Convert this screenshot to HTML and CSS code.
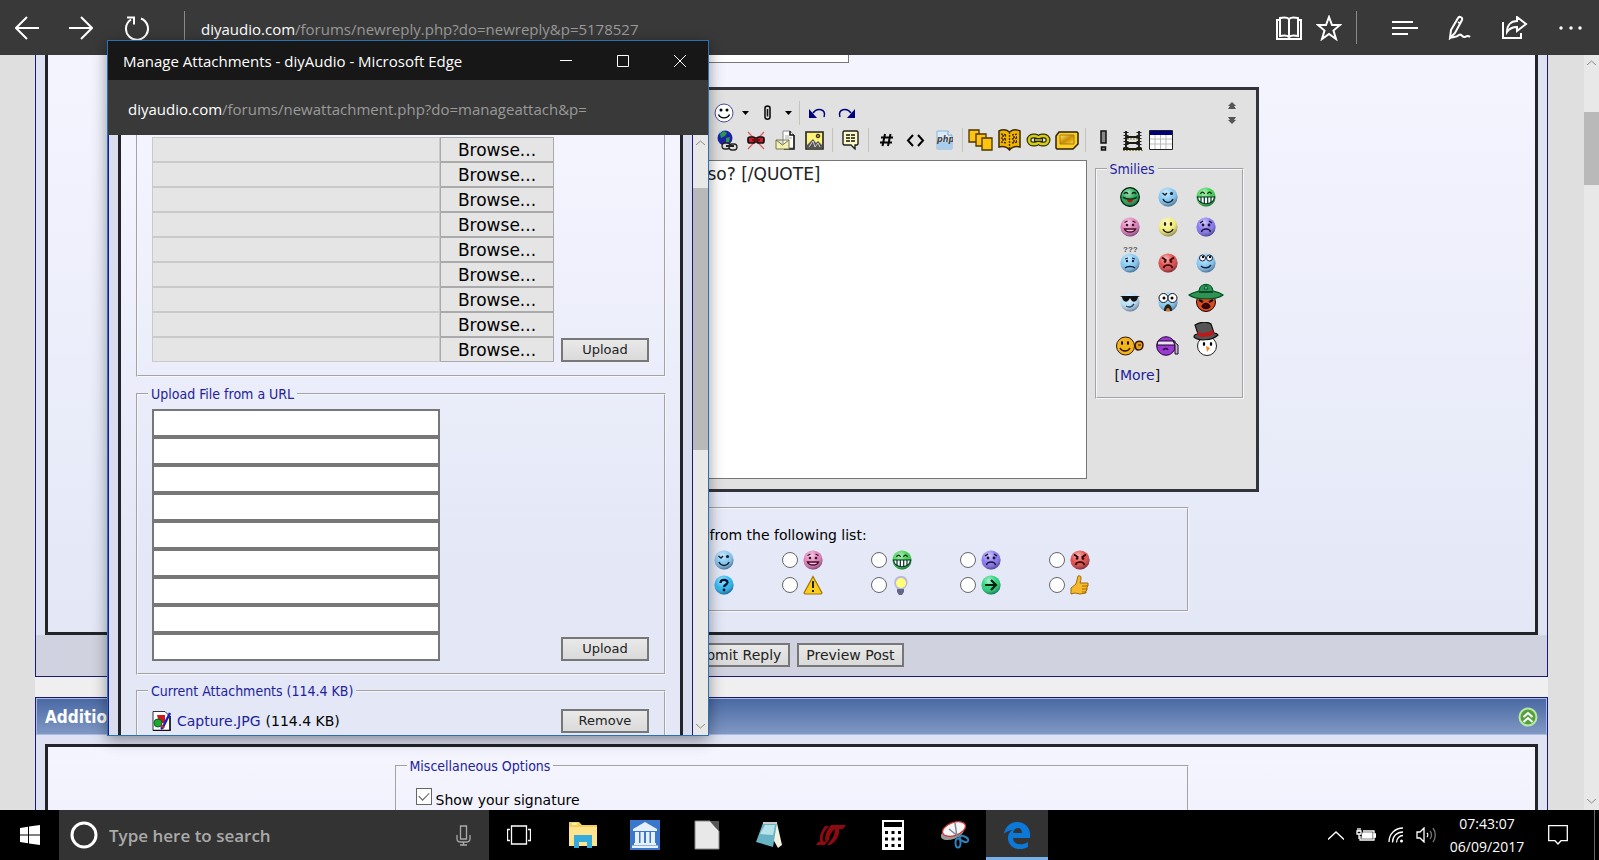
FILE: index.html
```html
<!DOCTYPE html>
<html lang="en">
<head>
    <meta charset="UTF-8">
    <meta name="viewport" content="width=device-width, initial-scale=1.0">
    <title>diyAudio - Reply to Thread</title>
    <link rel="stylesheet" href="styles.css">
</head>
<body>
    <!-- Shared icon shapes -->
    <svg class="sprite" aria-hidden="true">
        <defs>
            <radialGradient id="gloss" cx="40%" cy="28%" r="75%">
                <stop offset="0" stop-color="#fff" stop-opacity=".65"/>
                <stop offset=".5" stop-color="#fff" stop-opacity=".1"/>
                <stop offset="1" stop-color="#002" stop-opacity=".5"/>
            </radialGradient>
            <symbol id="ball" viewBox="0 0 20 20">
                <circle cx="10" cy="10" r="9.6" fill="currentColor"/>
                <circle cx="10" cy="10" r="9.6" fill="url(#gloss)"/>
            </symbol>
            <symbol id="wink" viewBox="0 0 20 20">
                <use href="#ball"/>
                <path d="M4.5 6l2.5 2 2-2M5 12c2 4.5 8 4.500 10 0" fill="none" stroke="#123" stroke-width="1.5"/>
                <circle cx="13.500" cy="6.500" r="1.600" fill="#123"/>
            </symbol>
            <symbol id="happy" viewBox="0 0 20 20">
                <use href="#ball"/>
                <path d="M4.500 5.500l3-1.500M15.500 5.500l-3-1.500" stroke="#412" stroke-width="1.300"/>
                <path d="M4.500 12h11c-1.500 4-9.500 4-11 0z" fill="#fbe" stroke="#412" stroke-width="1.400"/>
                <circle cx="7" cy="8" r="1.300" fill="#412"/><circle cx="13" cy="8" r="1.300" fill="#412"/>
            </symbol>
            <symbol id="smile" viewBox="0 0 20 20">
                <use href="#ball"/>
                <path d="M5 12c2 4.500 8 4.500 10 0" fill="none" stroke="#221" stroke-width="1.500"/>
                <ellipse cx="7" cy="7" rx="1.200" ry="2" fill="#221"/><ellipse cx="13" cy="7" rx="1.200" ry="2" fill="#221"/>
            </symbol>
            <symbol id="sad" viewBox="0 0 20 20">
                <use href="#ball"/>
                <path d="M4 6l3-2M16 6l-3-2M5.500 15c1-4 8-4 9 0" fill="none" stroke="#213" stroke-width="1.500"/>
                <circle cx="7" cy="8" r="1.400" fill="#213"/><circle cx="13" cy="8" r="1.400" fill="#213"/>
            </symbol>
            <symbol id="mad" viewBox="0 0 20 20">
                <use href="#ball"/>
                <path d="M4 4.500l4.500 3M16 4.500l-4.500 3M5.500 15c1-4 8-4 9 0" fill="none" stroke="#300" stroke-width="1.600"/>
                <circle cx="7" cy="8.500" r="1.300" fill="#300"/><circle cx="13" cy="8.500" r="1.300" fill="#300"/>
            </symbol>
            <symbol id="grin" viewBox="0 0 20 20">
                <use href="#ball"/>
                <path d="M4.500 7c1-2.500 3-2.500 4 0M11.500 7c1-2.500 3-2.500 4 0" fill="none" stroke="#031" stroke-width="1.300"/>
                <path d="M1.500 10h17c-.5 9-16.500 9-17 0z" fill="#fff" stroke="#032" stroke-width="1.200"/>
                <path d="M5 10v5.500M8.300 10v7M11.700 10v7M15 10v5.500" stroke="#032" stroke-width="1.200"/>
            </symbol>
            <linearGradient id="gold" x1="0" y1="0" x2="1" y2="1">
                <stop offset="0" stop-color="#ffe970"/><stop offset=".5" stop-color="#c98d08"/><stop offset="1" stop-color="#ffd83a"/>
            </linearGradient>
        </defs>
    </svg>

    <!-- Browser bar -->
    <header class="browser-bar">
        <button class="bar-btn" aria-label="Back"><svg width="24" height="24" viewBox="0 0 24 24"><path d="M24 12H1M12 1L1 12l11 11"/></svg></button>
        <button class="bar-btn forward" aria-label="Forward"><svg width="24" height="24" viewBox="0 0 24 24"><path d="M0 12h23M12 1l11 11-11 11"/></svg></button>
        <button class="bar-btn" aria-label="Refresh"><svg width="24" height="24" viewBox="0 0 24 24"><path d="M16 2.500A11 11 0 1 1 6 3.500M2 1.500h7v7"/></svg></button>
        <span class="bar-line"></span>
        <div class="address">diyaudio.com<span>/forums/newreply.php?do=newreply&amp;p=5178527</span></div>
        <button class="bar-btn book" aria-label="Reading view"><svg width="26" height="24" viewBox="0 0 26 24"><path d="M4 4H1v19h24V4h-3M4 2c4-1 7-1 9 1 2-2 5-2 9-1v18c-4-1-7-1-9 1-2-2-5-2-9-1zM13 3v18"/></svg></button>
        <button class="bar-btn star" aria-label="Add to favorites"><svg width="26" height="26" viewBox="0 0 26 26"><path d="M13 2l3 8h8l-6.500 5.500L20 24l-7-5-7 5 2.500-8.500L2 10h8z"/></svg></button>
        <span class="bar-line"></span>
        <button class="bar-btn hub" aria-label="Hub"><svg width="26" height="16" viewBox="0 0 26 16"><path d="M0 2h21M0 8h26M0 14h16"/></svg></button>
        <button class="bar-btn pen" aria-label="Web note"><svg width="24" height="25" viewBox="0 0 24 25"><path d="M3 15L10 3c1-2 5-1 4 2L7 18l-5 5 1-8zM10 7l3 2M2 23c4-1 7-1 9-3 3-2 3 3 6 2 3-2 4-1 5 0"/></svg></button>
        <button class="bar-btn share" aria-label="Share"><svg width="26" height="23" viewBox="0 0 26 23"><path d="M1 6v16h18v-5M15 1l9 7-9 7v-4c-5 0-8 2-10 5 0-7 4-11 10-11z"/></svg></button>
        <button class="bar-btn more" aria-label="More"><svg width="24" height="4" viewBox="0 0 24 4"><g fill="#fff" stroke="none"><circle cx="2" cy="2" r="1.700"/><circle cx="12" cy="2" r="1.700"/><circle cx="21" cy="2" r="1.700"/></g></svg></button>
    </header>

    <main class="viewport">
        <div class="page">
            <!-- Reply form -->
            <section class="panel reply-panel">
                <div class="panel-inner">
                    <div class="form-column">
                        <input class="title-input" type="text" aria-label="Title">
                        <div class="editor">
                            <div class="toolbar">
                                <button class="tool" aria-label="Smilies"><svg width="20" height="20" viewBox="0 0 20 20"><circle cx="10" cy="10" r="9" fill="#fff" stroke="#4a4a9c"/><circle cx="7" cy="7" r="1.500"/><circle cx="13" cy="7" r="1.500"/><path d="M4.500 11.500c2 4.500 9 4.500 11 0" fill="none" stroke="#000" stroke-width="1.300"/></svg></button>
                                <button class="caret" aria-label="More smilies"><svg width="7" height="4" viewBox="0 0 7 4"><path d="M0 0h7L3.500 4z"/></svg></button>
                                <button class="tool" aria-label="Attachments"><svg width="9" height="16" viewBox="0 0 9 16"><path d="M4.500 4v7.500M2 3v9c0 3 5 3 5 0V3c0-2.500-5-2.500-5 0" fill="none" stroke="#111" stroke-width="1.600"/></svg></button>
                                <button class="caret" aria-label="More attachments"><svg width="7" height="4" viewBox="0 0 7 4"><path d="M0 0h7L3.500 4z"/></svg></button>
                                <span class="tool-sep"></span>
                                <button class="tool" aria-label="Undo"><svg width="17" height="12" viewBox="0 0 17 12"><path d="M0 2v9h8z" fill="#00007c"/><path d="M4 6c4-6 14-4 11 4" fill="none" stroke="#00007c" stroke-width="1.500"/></svg></button>
                                <button class="tool" aria-label="Redo"><svg width="17" height="12" viewBox="0 0 17 12"><path d="M17 2v9H9z" fill="#00007c"/><path d="M13 6C9 0-1 2 2 10" fill="none" stroke="#00007c" stroke-width="1.500"/></svg></button>
                                <button class="resize" aria-label="Resize editor"><svg width="8" height="24" viewBox="0 0 8 24"><path d="M4 1l4 4H6l2 3H0l2-3H0zM4 23l4-4H6l2-3H0l2 3H0z" fill="#555"/></svg></button>
                            </div>
                            <div class="toolbar second">
                                <button class="tool" aria-label="Insert link"><svg width="21" height="21" viewBox="0 0 21 21"><circle cx="8" cy="8" r="7.500" fill="#1b22a8"/><path d="M3 4l4-3 3 2-2 3-4 2zM9 8l4-1-1 5-3 1z" fill="#2a9a4a"/><path d="M2 3l3-2" stroke="#8cf" stroke-width="1.500"/><g fill="#ddd" stroke="#222" stroke-width="1.300"><rect x="5" y="13" width="8" height="6" rx="3"/><rect x="12" y="14" width="8" height="6" rx="3"/><path d="M9 16h8" stroke-width="2"/></g></svg></button>
                                <button class="tool" aria-label="Remove link"><svg width="18" height="20" viewBox="0 0 18 20"><path d="M1 2l16 17M17 2L1 19" stroke="#e0606a" stroke-width="1.300"/><g fill="#c8202c" stroke="#111" stroke-width="1.700"><rect x="1" y="7" width="7" height="6" rx="2"/><rect x="10" y="7" width="7" height="6" rx="2"/></g><path d="M5 10h8M9 7v6" stroke="#701018" stroke-width="2"/></svg></button>
                                <button class="tool" aria-label="Insert email link"><svg width="21" height="21" viewBox="0 0 21 21"><path d="M8 1h7l4 4v13H8z" fill="#fff" stroke="#888"/><path d="M19 5v14H9M15 1v4h4" fill="none" stroke="#111" stroke-width="1.500"/><path d="M10 6h4M10 8h7" stroke="#aaa"/><path d="M1 10h13v9H1zM1 10l6.500 5L14 10" fill="#f2f0b4" stroke="#777744"/></svg></button>
                                <button class="tool" aria-label="Insert image"><svg width="19" height="19" viewBox="0 0 19 19"><path d="M1 1h17v17H1z" fill="#fdf27a" stroke="#222" stroke-width="1.600"/><circle cx="13" cy="5" r="1.800" fill="#a80" stroke="#222"/><path d="M2 17v-3l6-6 3 4 2-2 4 4v3z" fill="#555"/><path d="M4 16l4-6 2 6 3-4 2 4" fill="none" stroke="#ccc"/></svg></button>
                                <span class="tool-sep"></span>
                                <button class="tool" aria-label="Quote"><svg width="17" height="20" viewBox="0 0 17 20"><path d="M2 1h13l1 1v12l-1 1h-2v4l-4-4H2l-1-1V2z" fill="#fffbc4" stroke="#222" stroke-width="1.400"/><path d="M4 5h9M4 8h9M4 11h9" stroke="#111" stroke-width="1.500" stroke-dasharray="4 1"/></svg></button>
                                <span class="tool-sep"></span>
                                <button class="tool" aria-label="Code"><svg width="15" height="16" viewBox="0 0 15 16"><path d="M6 2L3.500 14M11.500 2L9 14M2 5.500h12M1 10.500h12" stroke="#000" stroke-width="2"/></svg></button>
                                <button class="tool" aria-label="HTML"><svg width="19" height="13" viewBox="0 0 19 13"><path d="M7 1L2 6.500 7 12M12 1l5 5.500-5 5.500" fill="none" stroke="#000" stroke-width="2"/></svg></button>
                                <button class="tool" aria-label="PHP"><svg width="17" height="20" viewBox="0 0 17 20"><path d="M1 1h11l4 4v14H1z" fill="#d9ebf9" stroke="#8fb4d6"/><path d="M1 12h15v7H1z" fill="#a9cdec"/><path d="M12 1v4h4" fill="#fff" stroke="#6e9cc8"/><text x="1" y="12" class="php-text">php</text></svg></button>
                                <span class="tool-sep"></span>
                                <button class="tool" aria-label="Copies"><svg width="25" height="22" viewBox="0 0 25 22"><g fill="#ffc410" stroke="#4c3400" stroke-width="1.300"><path d="M1 1h10v12H1z"/><path d="M8 5h10v12H8z"/><path d="M14 9h10v12H14z"/></g></svg></button>
                                <button class="tool" aria-label="Wiki"><svg width="23" height="22" viewBox="0 0 23 22"><path d="M1 2c4-2 8-1 10.500 1C14 1 18 0 22 2v16c-4-1-8 0-10.500 3C9 18 5 17 1 18z" fill="#f2b400" stroke="#3c2a00" stroke-width="1.500"/><path d="M11.500 3v17M3 5l6 1M3 9l6 1M3 13l6 1M14 6l6-1M14 10l6-1M14 14l6-1M4 7h4M15 8h4M4 11h4M15 12h4" stroke="#3c2a00" stroke-width="1.300" stroke-dasharray="2 1"/></svg></button>
                                <button class="tool" aria-label="Hyperlink"><svg width="25" height="14" viewBox="0 0 25 14"><g fill="none"><g stroke="#333300" stroke-width="5"><rect x="3" y="3" width="10" height="8" rx="4"/><rect x="12" y="3" width="10" height="8" rx="4"/></g><g stroke="#d6cc16" stroke-width="2.500"><rect x="3" y="3" width="10" height="8" rx="4"/><rect x="12" y="3" width="10" height="8" rx="4"/></g><path d="M8 7h9" stroke="#222" stroke-width="4"/><path d="M9 7h7" stroke="#d6cc16" stroke-width="1.500"/></g></svg></button>
                                <button class="tool" aria-label="Gold"><svg width="24" height="19" viewBox="0 0 24 19"><path d="M4 1h18l1 1v11l-5 5H2l-1-1V5z" fill="#f9cf2e" stroke="#2c2000" stroke-width="1.500"/><path d="M5 4h14v9H5z" fill="url(#gold)" stroke="#a87808"/></svg></button>
                                <span class="tool-sep"></span>
                                <button class="tool" aria-label="Important"><svg width="7" height="21" viewBox="0 0 7 21"><path d="M1 1h5v12H1zM1.500 17h4v3h-4z" fill="#888" stroke="#111" stroke-width="1.500"/></svg></button>
                                <button class="tool" aria-label="Strikethrough"><svg width="21" height="21" viewBox="0 0 21 21"><path d="M4 1v17M17 1v17" stroke="#222" stroke-width="2"/><path d="M4 2v16M17 2v16" stroke="#222" stroke-width="5" stroke-dasharray="1 2"/><path d="M4 7h13M4 13h13M1 19h19" stroke="#1a1a10" stroke-width="1.800"/><path d="M5 9h11M1 20.500h20" stroke="#8d8b4b" stroke-dasharray="2 1"/></svg></button>
                                <button class="tool" aria-label="Insert table"><svg width="24" height="20" viewBox="0 0 24 20"><path d="M.5.5h23v19H.5z" fill="#fff" stroke="#222"/><path d="M1 1h22v4H1z" fill="#00007c"/><path d="M6 5v14M11.500 5v14M17 5v14M1 9h22M1 14h22" stroke="#bbb"/></svg></button>
                            </div>
                            <div class="editor-body">
                                <textarea class="message" aria-label="Message" spellcheck="false">so? [/QUOTE]</textarea>
                                <fieldset class="box smilies">
                                    <legend>Smilies</legend>
                                    <div class="smilie-grid">
                                        <svg class="green" width="20" height="20" viewBox="0 0 20 20"><use href="#ball"/><circle cx="10" cy="10" r="9.300" fill="none" stroke="#021" stroke-width="1.200"/><path d="M4 7c1-2 3-2 4 0M12 7c1-2 3-2 4 0" fill="none" stroke="#021" stroke-width="1.300"/><path d="M3 10c3 3 11 3 14 0" fill="none" stroke="#021" stroke-width="1.300"/><path d="M7 12.500h6c0 4-6 4-6 0z" fill="#b01818"/></svg>
                                        <svg class="blue" width="20" height="20"><use href="#wink"/></svg>
                                        <svg class="lime" width="20" height="20"><use href="#grin"/></svg>
                                        <svg class="pink" width="20" height="20"><use href="#happy"/></svg>
                                        <svg class="yellow" width="20" height="20"><use href="#smile"/></svg>
                                        <svg class="violet" width="20" height="20"><use href="#sad"/></svg>
                                        <svg class="blue" width="20" height="27" viewBox="0 0 20 27"><use href="#ball" y="7" width="20" height="20"/><text x="3" y="6" class="huh-text">???</text><path d="M5 22c2-2 8-2 10 0M5 13l3-1M15 13l-3-1" fill="none" stroke="#124" stroke-width="1.300"/><circle cx="7" cy="15" r="1.200" fill="#124"/><circle cx="13" cy="15" r="1.200" fill="#124"/></svg>
                                        <svg class="red" width="20" height="20"><use href="#mad"/></svg>
                                        <svg class="blue" width="20" height="20" viewBox="0 0 20 20"><use href="#ball"/><circle cx="6.500" cy="5" r="3" fill="#fff" stroke="#124"/><circle cx="13.500" cy="5" r="3" fill="#fff" stroke="#124"/><circle cx="7" cy="4" r="1.200"/><circle cx="14" cy="4" r="1.200"/><path d="M5 13c3 3 8 2 10-1" fill="none" stroke="#124" stroke-width="1.500"/></svg>
                                        <svg class="ice" width="20" height="20" viewBox="0 0 20 20"><use href="#ball"/><path d="M0 4h20l-2 1c-1 6-6 6-8 1-2 5-7 5-8-1z" fill="#111"/><path d="M6 14c3 2 6 1 8-2" fill="none" stroke="#246" stroke-width="1.400"/></svg>
                                        <svg class="blue" width="20" height="20" viewBox="0 0 20 20"><use href="#ball"/><g fill="#fff" stroke="#112"><circle cx="5.500" cy="6" r="4.500"/><circle cx="14.500" cy="6" r="4.500"/></g><circle cx="6" cy="6" r="1.500"/><circle cx="14" cy="6" r="1.500"/><path d="M6 19c0-9 8-9 8 0z" fill="#221"/><path d="M8 19c0-4 4-4 4 0z" fill="#e07030"/></svg>
                                        <svg class="red" width="36" height="29" viewBox="0 0 36 29"><circle cx="18" cy="19" r="9.500" fill="#d84a20" stroke="#100"/><path d="M11 17l4 2M25 17l-4 2" stroke="#200" stroke-width="2"/><path d="M14 24c0-5 8-5 8 0-2 2-6 2-8 0z" fill="#400" stroke="#000"/><path d="M1 12c4-3 8-3 10-4 1-9 13-9 14 0 3 1 6 1 10 4-6 5-28 5-34 0z" fill="#2f9255" stroke="#052" stroke-width="1.200"/><path d="M11 9h14" stroke="#0a4a24" stroke-width="2"/><path d="M16 6l2-4 2 4z" fill="#8cb" stroke="#053"/></svg>
                                        <svg class="wave" width="28" height="20" viewBox="0 0 28 20"><circle cx="9.500" cy="10" r="9" fill="#f2b51c" stroke="#310"/><ellipse cx="6" cy="7" rx="1" ry="2"/><ellipse cx="12" cy="7" rx="1" ry="2"/><path d="M4 12c2 4 8 4 10 0" fill="none" stroke="#310" stroke-width="1.400"/><path d="M19 9c1-5 8-5 8 0s-3 5-5 5c-3 0-2-2-3-5z" fill="#e0a01a" stroke="#310" stroke-width="1.400"/><path d="M22 9h3" stroke="#310"/></svg>
                                        <svg width="24" height="20" viewBox="0 0 24 20"><circle cx="10" cy="10" r="9.300" fill="#9a3ad2" stroke="#203"/><path d="M2 5h17v4H1z" fill="#e8e2f2" stroke="#203"/><path d="M17 5l5 4v9h-3V9z" fill="#bbb" stroke="#203"/><path d="M7 14c2-2 4-2 5 0" fill="none" stroke="#203" stroke-width="1.500"/></svg>
                                        <svg width="26" height="34" viewBox="0 0 26 34"><circle cx="14" cy="24" r="9.500" fill="#fff" stroke="#222"/><path d="M1 15c4 4 18 4 24-2-1-2-2-2-4-2L18 2C13-1 7 0 2 3l3 9c-3 0-4 1-4 3z" fill="#555" stroke="#111" stroke-width="1.200"/><path d="M4 10c5 2 11 1 16-2l1 4c-5 3-11 4-16 2z" fill="#c01818"/><ellipse cx="11" cy="22" rx="1.200" ry="2"/><ellipse cx="18" cy="22" rx="1.200" ry="2"/><path d="M13 24l4 2-3 4z" fill="#f08a20"/></svg>
                                    </div>
                                    <a class="more-link" href="#more">[<span>More</span>]</a>
                                </fieldset>
                            </div>
                        </div>

                        <fieldset class="box post-icons">
                            <p>from the following list:</p>
                            <div class="icon-grid">
                                <label><input type="radio" name="icon"><svg class="blue" width="20" height="20"><use href="#wink"/></svg></label>
                                <label><input type="radio" name="icon"><svg class="pink" width="20" height="20"><use href="#happy"/></svg></label>
                                <label><input type="radio" name="icon"><svg class="lime" width="20" height="20"><use href="#grin"/></svg></label>
                                <label><input type="radio" name="icon"><svg class="violet" width="20" height="20"><use href="#sad"/></svg></label>
                                <label><input type="radio" name="icon"><svg class="red" width="20" height="20"><use href="#mad"/></svg></label>
                                <label><input type="radio" name="icon"><svg class="sky" width="20" height="20" viewBox="0 0 20 20"><use href="#ball"/><path d="M6.500 8c0-4 7-4 7-.5 0 2-3.500 2.500-3.500 4.500" fill="none" stroke="#013" stroke-width="2.200"/><circle cx="10" cy="15" r="1.400" fill="#013"/></svg></label>
                                <label><input type="radio" name="icon"><svg width="20" height="20" viewBox="0 0 20 20"><path d="M10 1.500l9 16.500-1 1H2l-1-1z" fill="#fccf1c" stroke="#a07400" stroke-width="1.200"/><path d="M10 6v7M10 15v2" stroke="#222" stroke-width="2"/></svg></label>
                                <label><input type="radio" name="icon"><svg width="20" height="20" viewBox="0 0 20 20"><path d="M5 14C0 9 2 1 9 1s9 8 3 13z" fill="#b9b8dc"/><circle cx="9" cy="8" r="5" fill="#ffff7a"/><path d="M5 14h7v3l-2 3H7l-2-3z" fill="#66668c"/></svg></label>
                                <label><input type="radio" name="icon"><svg class="mint" width="20" height="20" viewBox="0 0 20 20"><use href="#ball"/><path d="M4 10h11M10 5l5 5-5 5" fill="none" stroke="#021" stroke-width="2.200"/></svg></label>
                                <label><input type="radio" name="icon"><svg width="20" height="20" viewBox="0 0 20 20"><path d="M1 13l5-4 2-8c3-1 4 1 2 7h8v3l-1 1v3l-1 1v2l-6 1-5-1-4 1z" fill="#f7b92c" stroke="#a06a08"/><path d="M12 11h6M12 14h5M12 17h4" stroke="#a06a08"/></svg></label>
                            </div>
                        </fieldset>
                    </div>
                </div>
                <div class="panel-actions">
                    <button class="btn">Submit Reply</button>
                    <button class="btn">Preview Post</button>
                </div>
            </section>

            <!-- Additional options -->
            <section class="panel">
                <h2 class="panel-head">
                    Additional Options
                    <button class="collapse" aria-label="Collapse"><svg width="20" height="20" viewBox="0 0 20 20"><circle cx="10" cy="10" r="8.500" fill="#56a040" stroke="#b9eaa4" stroke-width="2"/><path d="M5.500 10L10 6l4.500 4M5.500 15l4.500-4 4.500 4" fill="none" stroke="#fff" stroke-width="2"/></svg></button>
                </h2>
                <div class="panel-inner options">
                    <div class="form-column">
                        <fieldset class="box misc">
                            <legend>Miscellaneous Options</legend>
                            <label><input type="checkbox" checked>Show your signature</label>
                        </fieldset>
                    </div>
                </div>
            </section>
        </div>

        <div class="scrollbar">
            <svg width="9" height="5" viewBox="0 0 9 5"><path d="M0 5l4.500-4L9 5"/></svg>
            <div class="thumb"></div>
            <svg class="down" width="9" height="5" viewBox="0 0 9 5"><path d="M0 0l4.500 4L9 0"/></svg>
        </div>
    </main>

    <!-- Attachment window -->
    <div class="popup">
        <div class="popup-title">
            <span>Manage Attachments - diyAudio - Microsoft Edge</span>
            <button aria-label="Minimize"><svg width="12" height="12" viewBox="0 0 12 12"><path d="M0 5.500h12"/></svg></button>
            <button aria-label="Maximize"><svg width="12" height="12" viewBox="0 0 12 12"><path d="M.5.5h11v11H.5z"/></svg></button>
            <button aria-label="Close"><svg width="12" height="12" viewBox="0 0 12 12"><path d="M0 0l12 12M12 0L0 12"/></svg></button>
        </div>
        <div class="popup-address">diyaudio.com<span>/forums/newattachment.php?do=manageattach&amp;p=</span></div>
        <div class="popup-view">
            <div class="popup-page">
                <div class="popup-inner">
                    <fieldset class="box files">
                        <div class="rows">
                            <div class="file-row"><input type="text" aria-label="File 1" readonly><button>Browse...</button></div>
                            <div class="file-row"><input type="text" aria-label="File 2" readonly><button>Browse...</button></div>
                            <div class="file-row"><input type="text" aria-label="File 3" readonly><button>Browse...</button></div>
                            <div class="file-row"><input type="text" aria-label="File 4" readonly><button>Browse...</button></div>
                            <div class="file-row"><input type="text" aria-label="File 5" readonly><button>Browse...</button></div>
                            <div class="file-row"><input type="text" aria-label="File 6" readonly><button>Browse...</button></div>
                            <div class="file-row"><input type="text" aria-label="File 7" readonly><button>Browse...</button></div>
                            <div class="file-row"><input type="text" aria-label="File 8" readonly><button>Browse...</button></div>
                            <div class="file-row"><input type="text" aria-label="File 9" readonly><button>Browse...</button></div>
                        </div>
                        <button class="btn wide">Upload</button>
                    </fieldset>
                    <fieldset class="box urls">
                        <legend>Upload File from a URL</legend>
                        <div class="box-row">
                            <div class="rows">
                                <input type="text" aria-label="URL 1">
                                <input type="text" aria-label="URL 2">
                                <input type="text" aria-label="URL 3">
                                <input type="text" aria-label="URL 4">
                                <input type="text" aria-label="URL 5">
                                <input type="text" aria-label="URL 6">
                                <input type="text" aria-label="URL 7">
                                <input type="text" aria-label="URL 8">
                                <input type="text" aria-label="URL 9">
                            </div>
                            <button class="btn wide">Upload</button>
                        </div>
                    </fieldset>
                    <fieldset class="box current">
                        <legend>Current Attachments (114.4 KB)</legend>
                        <div class="box-row">
                            <div class="attachment">
                                <svg width="20" height="20" viewBox="0 0 20 20"><path d="M1 .5h12l5 5v14H1z" fill="#fff" stroke="#333"/><path d="M18 5v14.500H1" fill="none" stroke="#111" stroke-width="1.500"/><path d="M5 4h8v8H7z" fill="#d01818"/><circle cx="6" cy="12" r="4" fill="#1fa82c" stroke="#063"/><path d="M18 2l-7 14-2 2" stroke="#1b22c8" stroke-width="2.500"/><path d="M9 14l3 3" stroke="#c22" stroke-width="2"/></svg>
                                <a href="#capture">Capture.JPG</a> (114.4 KB)
                            </div>
                            <button class="btn wide">Remove</button>
                        </div>
                    </fieldset>
                </div>
            </div>
            <div class="scrollbar">
                <svg width="9" height="5" viewBox="0 0 9 5"><path d="M0 5l4.500-4L9 5"/></svg>
                <div class="thumb"></div>
                <svg class="down" width="9" height="5" viewBox="0 0 9 5"><path d="M0 0l4.500 4L9 0"/></svg>
            </div>
        </div>
    </div>

    <!-- Taskbar -->
    <footer class="taskbar">
        <button class="start" aria-label="Start"><svg width="20" height="20" viewBox="0 0 20 20"><path d="M0 3l8-1.200V9.500H0zM9 1.600L20 0v9.500H9zM0 10.500h8v7.700L0 17zM9 10.500h11V20L9 18.400z" fill="#fff"/></svg></button>
        <div class="search">
            <svg width="28" height="28" viewBox="0 0 28 28"><circle cx="14" cy="14" r="12" fill="none" stroke="#fff" stroke-width="3"/></svg>
            <input type="text" placeholder="Type here to search" aria-label="Search">
            <svg width="15" height="21" viewBox="0 0 15 21"><path d="M4.500 1h6v13h-6zM1 10v4c0 2 2 3 4 3h5c2 0 4-1 4-3v-4M7.500 17v3M4 20h7" fill="none" stroke="#aaa" stroke-width="1.300"/></svg>
        </div>
        <button class="task view" aria-label="Task view"><svg width="24" height="20" viewBox="0 0 24 20"><path d="M4.500 1h15v18h-15zM3 4.500H.5v11H3M21 4.500h2.500v11H21" fill="none" stroke="#fff" stroke-width="1.300"/></svg></button>
        <button class="task" aria-label="File Explorer"><svg width="28" height="28" viewBox="0 0 28 28"><path d="M0 1h10l3 3h15v21H0z" fill="#f3cf60"/><path d="M0 6h28v19H0z" fill="#ffe48e"/><path d="M3 2h5v2H3z" fill="#fff3c0"/><path d="M5 27V14h18v13h-5v-6h-8v6z" fill="#35aadc"/></svg></button>
        <button class="task" aria-label="Library"><svg width="30" height="30" viewBox="0 0 30 30"><path d="M0 0h30v30H0z" fill="#3a78cc"/><path d="M15 2l12 7v2H3V9zM5 12h4v11H5zM10.500 12h3.500v11h-3.500zM16 12h3.500v11H16zM21 12h4v11h-4zM4 23h22v2H4zM2 25.500h26V28H2z" fill="#e6f0ff"/></svg></button>
        <button class="task" aria-label="LibreOffice"><svg width="26" height="30" viewBox="0 0 26 30"><path d="M1 1h15l9 10v18H1z" fill="#e8e8e8" stroke="#888"/><path d="M16 1h9v10z" fill="#555"/></svg></button>
        <button class="task" aria-label="Notepad"><svg width="28" height="28" viewBox="0 0 28 28"><path d="M9 2h13l5 22-4 3z" fill="#f1f1e2"/><path d="M8 2h14l-4 24L1 21z" fill="#68b4c4"/><path d="M10 4h10l-2 10-13-1z" fill="#b8e2ea"/><path d="M8 2h14" stroke="#ccc" stroke-width="2"/></svg></button>
        <button class="task" aria-label="LTspice"><svg width="30" height="22" viewBox="0 0 30 22"><path d="M9 2h4C8 7 6 12 7 17l4 1-2 3H0l2-3h2c-1-5 1-11 5-16zM15 1h15l-3 4h-4c1 6-3 13-9 16h-3c5-5 8-10 8-16-4 3-6 7-6 11l-3 3c-2-6 0-12 5-18z" fill="#8c0a10"/></svg></button>
        <button class="task" aria-label="Calculator"><svg width="22" height="30" viewBox="0 0 22 30"><path d="M0 0h22v30H0z" fill="#fff"/><path d="M2 2h18v5H2zM3 11h3v3H3zM9.500 11h3v3h-3zM16 11h3v3h-3zM3 17.500h3v3H3zM9.500 17.500h3v3h-3zM16 17.500h3v3h-3zM3 24h3v3H3zM9.500 24h3v3h-3zM16 24h3v3h-3z" fill="#000"/></svg></button>
        <button class="task" aria-label="Snipping Tool"><svg width="28" height="28" viewBox="0 0 28 28"><ellipse cx="12" cy="12" rx="12" ry="6" fill="#999" transform="rotate(-20 12 14)"/><ellipse cx="13" cy="8" rx="12" ry="6.500" fill="#f6f6f6" stroke="#c33" stroke-width="1.300" transform="rotate(-20 13 8)"/><path d="M14 2l2 14M8 8l10 8" stroke="#789" stroke-width="1.500"/><g fill="none" stroke="#2b83c0" stroke-width="2"><ellipse cx="17" cy="22" rx="2.500" ry="4.500"/><ellipse cx="23" cy="18" rx="4.500" ry="2.500" transform="rotate(25 23 18)"/></g></svg></button>
        <button class="task active" aria-label="Microsoft Edge"><svg width="26" height="27" viewBox="0 0 26 27"><path d="M0 12C1 5 6 0 13 0c8 0 13 6 13 12v4H9c0 7 9 8 15 4v5c-9 5-20 1-20-9 0-4 2-7 5-8-3 0-6 1-9 4zm9-1h9c0-7-8-6-9 0z" fill="#0c78d8"/></svg></button>
        <div class="tray">
            <button aria-label="Show hidden icons"><svg width="16" height="9" viewBox="0 0 16 9"><path d="M0 8.500L8 1l8 7.500"/></svg></button>
            <button aria-label="Battery"><svg width="20" height="14" viewBox="0 0 20 14"><path d="M7 3h11v9H4V8"/><path d="M7 5h9v5H6zM18 6h2v3h-2z" fill="#fff"/><path d="M1 3h4v3H1zM2 0v3M4 0v3M3 6v5"/></svg></button>
            <button aria-label="Network"><svg width="16" height="16" viewBox="0 0 16 16"><path d="M1 15C1 7 7 1 15 1M4.500 15.500C4.500 9 9 5 15 5M8.500 15.500c0-4 3-7 6.500-7"/><circle cx="13.500" cy="14" r="1.500" fill="#fff" stroke="none"/></svg></button>
            <button aria-label="Volume"><svg width="20" height="16" viewBox="0 0 20 16"><path d="M1 5h3l4-4v14l-4-4H1zM11 6c1 1 1 3 0 4"/><path d="M14 4c2 2 2 6 0 8M17 1c3 4 3 10 0 14" stroke="#777"/></svg></button>
            <div class="clock"><div>07:43:07</div><div>06/09/2017</div></div>
            <button class="notify" aria-label="Notifications"><svg width="20" height="20" viewBox="0 0 20 20"><path d="M.7.7h18.600v15H13L10 19l-3-3.300H.7z"/></svg></button>
        </div>
    </footer>
</body>
</html>
```
FILE: styles.css
```css
* {
    box-sizing: border-box;
}
body {
    margin: 0;
    height: 100vh;
    display: flex;
    flex-direction: column;
    overflow: hidden;
    font-family: "DejaVu Sans", Verdana, sans-serif;
    font-size: 14px;
    color: #000;
}
button {
    font-family: inherit;
    margin: 0;
    padding: 0;
    border: 0;
    background: none;
}
svg {
    display: block;
    flex-shrink: 0;
}
.sprite {
    position: absolute;
    width: 0;
    height: 0;
}
/* Browser bar */
.browser-bar {
    height: 55px;
    flex-shrink: 0;
    display: flex;
    align-items: center;
    background-color: #393939;
    padding-left: 15px;
}
.bar-btn {
    margin-right: 30px;
}
.bar-btn svg {
    fill: none;
    stroke: #fff;
    stroke-width: 2;
}
.bar-btn.forward {
    margin-right: 32px;
}
.bar-line {
    width: 1px;
    height: 33px;
    background-color: #8a8a8a;
    margin-left: 5px;
}
.address {
    flex: 1;
    margin-left: 16px;
    font-family: "Open Sans", "Segoe UI", sans-serif;
    font-size: 15px;
    color: #fff;
    padding-top: 2px;
}
.address span,
.popup-address span {
    color: #9a9a9a;
}
.bar-btn.book {
    margin-right: 14px;
}
.bar-btn.star {
    margin-right: 9px;
}
.bar-btn.hub {
    margin-left: 35px;
}
.bar-btn.share {
    margin-right: 31px;
}
.bar-btn.more {
    margin-right: 16px;
}
/* Scrolled page */
.viewport {
    flex: 1;
    min-height: 0;
    display: flex;
    overflow: hidden;
    background-color: #dfdfdf;
}
.page {
    flex: 1;
    min-width: 0;
    margin: 0 36px 0 35px;
    background-color: #efefef;
}
.panel {
    border: 1px solid #1a1a78;
    background-color: #dee2f2;
    margin-bottom: 20px;
}
.reply-panel {
    margin-top: -30px;
    padding-top: 9px;
}
.panel-inner {
    margin: 0 9px;
    border: 3px solid #222428;
    background-image: linear-gradient(#f5f5ff, #e3e7f6);
    padding-bottom: 20px;
}
.form-column {
    width: 794px;
    margin: 0 auto;
}
.title-input {
    display: block;
    width: 454px;
    height: 25px;
    border: 1px solid #777;
    background-color: #fff;
}
/* Fieldsets */
.box {
    min-width: 0;
    margin: 0;
    padding: 0 15px 12px 10px;
    border: 2px groove #f6f6fa;
}
.box legend {
    padding: 0 3px;
    height: 18px;
    line-height: 18px;
    font-family: "DejaVu Sans Condensed", Tahoma, sans-serif;
    font-size: 14px;
    color: #22229c;
}
/* Editor */
.editor {
    width: 864px;
    margin-top: 24px;
    padding: 10px 12px 10px 8px;
    border: 3px solid #33333a;
    background-color: #e1e1e2;
}
.toolbar {
    display: flex;
    align-items: center;
    height: 26px;
    padding-left: 304px;
}
.toolbar.second {
    height: 28px;
    padding-left: 307px;
    margin-bottom: 6px;
}
.tool {
    display: flex;
    justify-content: center;
    align-items: center;
    width: 29px;
    height: 26px;
}
.caret {
    display: flex;
    justify-content: center;
    width: 14px;
}
.tool-sep {
    width: 1px;
    height: 24px;
    margin: 0 3px;
    background-color: #c4c4bc;
}
.php-text {
    font: italic bold 8px "DejaVu Sans", sans-serif;
    fill: #444;
}
.huh-text {
    font: bold 8px "Liberation Sans", sans-serif;
    fill: #555;
}
.resize {
    margin: 0 8px 0 auto;
}
.editor-body {
    display: flex;
    align-items: flex-start;
    gap: 8px;
}
.message {
    flex: 1;
    height: 319px;
    resize: none;
    padding: 3px 2px 2px 301px;
    border: 1px solid #777;
    background-color: #fff;
    font-family: "DejaVu Sans", Verdana, sans-serif;
    font-size: 17px;
    color: #222;
}
.smilies {
    width: 149px;
    padding: 0 0 13px 10px;
}
.smilie-grid {
    display: grid;
    grid-template-columns: repeat(3, 38px);
    grid-template-rows: 29px 30px 36px 39px 44px;
    justify-items: center;
    align-items: end;
    margin-left: 4px;
}
.more-link {
    display: block;
    margin: 10px 0 0 8px;
    line-height: 18px;
    color: #111;
    text-decoration: none;
}
.more-link span {
    color: #22229c;
}
.green { color: #10a044; }
.blue { color: #7cc4f0; }
.lime { color: #30cc40; }
.pink { color: #dc74b4; }
.yellow { color: #f4ec70; }
.violet { color: #7c6cf0; }
.red { color: #dc3c38; }
.ice { color: #b4dcf4; }
.sky { color: #18b4f4; }
.mint { color: #14d070; }
/* Message icons */
.post-icons {
    margin-top: 15px;
    padding: 17px 10px 15px;
}
.post-icons p {
    margin: 0;
    padding-left: 303px;
    line-height: 18px;
}
.icon-grid {
    display: grid;
    grid-template-columns: repeat(5, 89px);
    gap: 5px 0;
    margin: 6px 0 0 286px;
}
.icon-grid label {
    display: flex;
    align-items: center;
    gap: 5px;
}
.icon-grid input {
    appearance: none;
    width: 16px;
    height: 16px;
    margin: 0;
    border: 1px solid #666;
    border-radius: 50%;
    background-color: #fff;
}
.panel-actions {
    display: flex;
    justify-content: center;
    gap: 7px;
    padding: 8px 0 9px;
    background-color: #d0d2df;
}
.btn {
    height: 24px;
    padding: 0 7px;
    border: 2px solid #777;
    background-image: linear-gradient(#e9e9e9, #dadada);
    color: #222;
    font-size: 14px;
    line-height: 20px;
}
.btn.wide {
    width: 88px;
    padding: 0;
    font-size: 13px;
}
/* Additional options */
.panel-head {
    display: flex;
    justify-content: space-between;
    align-items: center;
    height: 37px;
    margin: 0 0 9px;
    padding: 0 8px;
    border: 1px solid #a9bbe4;
    background-image: linear-gradient(#4a69a4, #8098c4);
    color: #fff;
    font-family: "DejaVu Sans Condensed", Tahoma, sans-serif;
    font-size: 17px;
}
.options {
    height: 300px;
    padding-top: 10px;
}
.misc {
    height: 200px;
}
.misc label {
    display: flex;
    align-items: flex-end;
    gap: 4px;
    padding: 13px 0 0 9px;
    line-height: 18px;
}
.misc input {
    appearance: none;
    width: 16px;
    height: 17px;
    margin: 0 0 4px;
    border: 1px solid #666;
    background-color: #fff;
}
.misc input:checked::before {
    content: "";
    display: block;
    width: 9px;
    height: 5px;
    margin: 3px 0 0 2px;
    border: solid #555;
    border-width: 0 0 1px 1px;
    transform: rotate(-45deg);
}
/* Scrollbars */
.scrollbar {
    width: 15px;
    flex-shrink: 0;
    display: flex;
    flex-direction: column;
    align-items: center;
    padding: 5px 0 6px;
    background-color: #e8e8e8;
}
.scrollbar path {
    fill: none;
    stroke: #888;
}
.scrollbar .thumb {
    width: 100%;
    height: 73px;
    margin-top: 47px;
    background-color: #b9b9b9;
}
.scrollbar .down {
    margin-top: auto;
}
/* Attachment window */
.popup {
    position: absolute;
    left: 107px;
    top: 40px;
    width: 602px;
    height: 696px;
    display: flex;
    flex-direction: column;
    border: 1px solid #2a72b4;
    background-color: #393939;
    box-shadow: 0 4px 14px rgba(0, 0, 0, 0.4);
}
.popup-title {
    display: flex;
    align-items: center;
    height: 39px;
    flex-shrink: 0;
    padding-left: 15px;
    background-color: #171717;
    color: #fff;
    font-family: "Open Sans", "Segoe UI", sans-serif;
    font-size: 15px;
}
.popup-title span {
    flex: 1;
}
.popup-title button {
    display: flex;
    justify-content: center;
    width: 57px;
}
.popup-title path {
    fill: none;
    stroke: #fff;
}
.popup-address {
    height: 55px;
    flex-shrink: 0;
    padding-left: 20px;
    line-height: 58px;
    color: #fff;
    font-family: "Open Sans", "Segoe UI", sans-serif;
    font-size: 15px;
}
.popup-view {
    flex: 1;
    min-height: 0;
    display: flex;
    overflow: hidden;
}
.popup-page {
    flex: 1;
    padding: 0 9px;
    border-left: 1px solid #1a1a98;
    border-right: 1px solid #1a1a78;
    background-color: #dadded;
}
.popup-inner {
    height: 640px;
    padding: 0 14px 0 15px;
    border: 3px solid #222428;
    border-top: 0;
    background-image: linear-gradient(#f5f5ff, #e3e7f6 70%);
}
.popup .scrollbar .thumb {
    height: 262px;
    margin-top: 43px;
}
.files {
    display: flex;
    justify-content: space-between;
    align-items: flex-end;
    margin-top: -10px;
    padding: 10px 15px 13px 14px;
}
.rows {
    display: flex;
    flex-direction: column;
}
.file-row {
    display: flex;
    height: 25px;
}
.file-row input {
    width: 288px;
    border: 1px solid #cacaca;
    background-color: #e5e5e5;
}
.file-row button {
    width: 114px;
    border: 1px solid #aaa;
    background-color: #e5e5e5;
    color: #000;
    font-size: 17px;
    line-height: 22px;
}
.urls {
    margin-top: 8px;
}
.current {
    margin-top: 7px;
}
.box-row {
    display: flex;
    justify-content: space-between;
    align-items: flex-end;
    padding: 6px 0 0 4px;
}
.urls .rows input {
    width: 288px;
    height: 28px;
    border: 2px solid #777;
    background-color: #fff;
}
.current .box-row {
    padding-top: 9px;
}
.attachment {
    display: flex;
    align-items: center;
    gap: 5px;
    height: 24px;
}
.attachment a {
    color: #22229c;
    text-decoration: none;
}
/* Taskbar */
.taskbar {
    display: flex;
    height: 50px;
    flex-shrink: 0;
    background-color: #000;
    color: #fff;
    font-family: "Open Sans", "Segoe UI", sans-serif;
}
.start {
    display: flex;
    justify-content: center;
    align-items: center;
    width: 59px;
}
.search {
    display: flex;
    align-items: center;
    width: 430px;
    padding: 0 18px 0 11px;
    background-color: #333;
}
.search input {
    flex: 1;
    min-width: 0;
    border: 0;
    margin-left: 9px;
    background: none;
    font-family: inherit;
    font-size: 17px;
    font-weight: 600;
}
.search input::placeholder {
    color: #aaa;
}
.task {
    display: flex;
    justify-content: center;
    align-items: center;
    width: 62px;
}
.task.view {
    width: 63px;
    padding-right: 4px;
}
.task.active {
    background-color: #333;
    border-bottom: 3px solid #76b0e6;
    padding-top: 3px;
}
.tray {
    display: flex;
    align-items: center;
    margin: 0 4px 0 auto;
    padding-right: 11px;
    border-right: 1px solid #666;
}
.tray button {
    display: flex;
    justify-content: center;
    width: 30px;
}
.tray svg {
    fill: none;
    stroke: #fff;
    stroke-width: 1.3;
}
.tray .notify {
    width: 50px;
}
.clock {
    width: 92px;
    text-align: center;
    font-size: 14px;
    line-height: 23px;
}
```
